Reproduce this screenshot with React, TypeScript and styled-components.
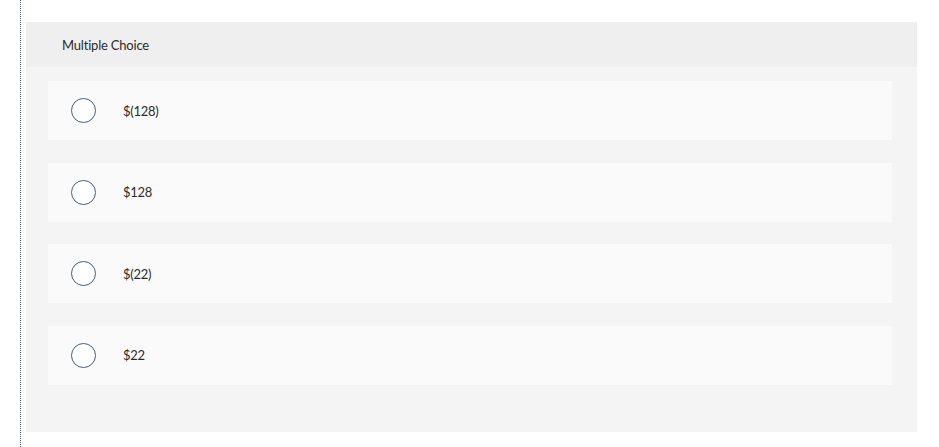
import styled, { createGlobalStyle } from "styled-components";

const GlobalStyle = createGlobalStyle`
  html, body {
    margin: 0;
    padding: 0;
    background: #ffffff;
  }
  body {
    font-family: Lato, "Open Sans", "Liberation Sans", sans-serif;
    color: #222;
  }
`;

const Page = styled.div`
  margin-left: 20px;
  min-height: 447px;
  border-left: 1px dotted #3d5f83;
  padding: 22px 0 0 5px;
  box-sizing: border-box;
`;

const Panel = styled.section`
  width: 891px;
  height: 410px;
  background: #f4f4f4;
  box-sizing: border-box;
`;

const Header = styled.div`
  height: 45px;
  display: flex;
  align-items: center;
  padding-left: 36px;
  background: #efefef;
  font-size: 13px;
  color: #2b2b2b;
  letter-spacing: -0.2px;
`;

const Options = styled.div`
  display: flex;
  flex-direction: column;
  gap: 22.5px;
  padding: 14px 25px 0 22px;
`;

const Option = styled.label`
  height: 59px;
  display: flex;
  align-items: center;
  background: #fafafa;
  padding-left: 23px;
  gap: 27px;
  font-size: 13px;
  color: #2b2b2b;
  letter-spacing: -0.3px;
  cursor: pointer;
`;

const Radio = styled.span`
  width: 23px;
  height: 23px;
  border: 1.3px solid #3d5f83;
  border-radius: 50%;
  background: #ffffff;
  flex-shrink: 0;
`;

const choices = ["$(128)", "$128", "$(22)", "$22"];

export default function App() {
  return (
    <>
      <GlobalStyle />
      <Page>
        <Panel>
          <Header>Multiple Choice</Header>
          <Options>
            {choices.map((c) => (
              <Option key={c}>
                <Radio />
                <span>{c}</span>
              </Option>
            ))}
          </Options>
        </Panel>
      </Page>
    </>
  );
}
